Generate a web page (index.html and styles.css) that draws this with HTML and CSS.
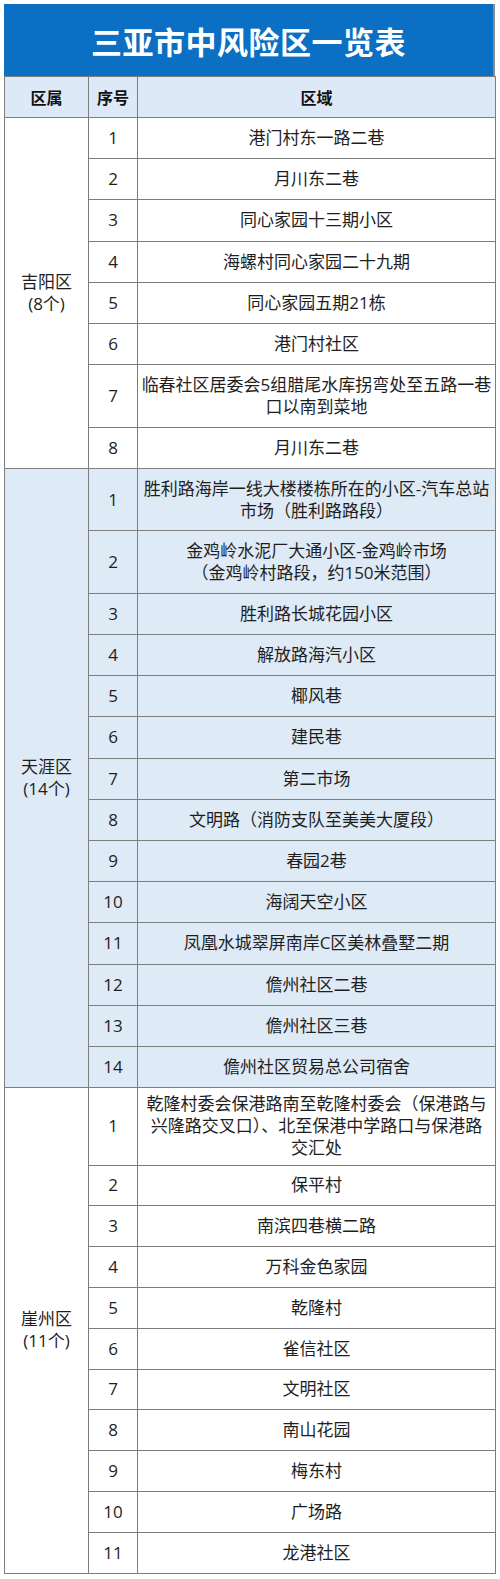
FILE: index.html
```html
<!DOCTYPE html>
<html lang="zh-CN">
<head>
<meta charset="utf-8">
<title>三亚市中风险区一览表</title>
<link rel="stylesheet" href="styles.css">
</head>
<body>
<div class="sheet">
  <div class="title">三亚市中风险区一览表</div>
  <table class="grid">
    <colgroup><col class="c1"><col class="c2"><col class="c3"></colgroup>
    <thead>
      <tr class="head"><th>区属</th><th>序号</th><th>区域</th></tr>
    </thead>
    <tbody class="jy">
      <tr class="r1"><td class="dist" rowspan="8">吉阳区<br>(8个)</td><td>1</td><td>港门村东一路二巷</td></tr>
      <tr class="r1"><td>2</td><td>月川东二巷</td></tr>
      <tr class="r1"><td>3</td><td>同心家园十三期小区</td></tr>
      <tr class="r1"><td>4</td><td>海螺村同心家园二十九期</td></tr>
      <tr class="r1"><td>5</td><td>同心家园五期21栋</td></tr>
      <tr class="r1"><td>6</td><td>港门村社区</td></tr>
      <tr class="r2"><td>7</td><td>临春社区居委会5组腊尾水库拐弯处至五路一巷<br>口以南到菜地</td></tr>
      <tr class="r1"><td>8</td><td>月川东二巷</td></tr>
    </tbody>
    <tbody class="ty">
      <tr class="r2"><td class="dist" rowspan="14">天涯区<br>(14个)</td><td>1</td><td>胜利路海岸一线大楼楼栋所在的小区-汽车总站<br>市场（胜利路路段）</td></tr>
      <tr class="r2"><td>2</td><td>金鸡岭水泥厂大通小区-金鸡岭市场<br>（金鸡岭村路段，约150米范围）</td></tr>
      <tr class="r1"><td>3</td><td>胜利路长城花园小区</td></tr>
      <tr class="r1"><td>4</td><td>解放路海汽小区</td></tr>
      <tr class="r1"><td>5</td><td>椰风巷</td></tr>
      <tr class="r1"><td>6</td><td>建民巷</td></tr>
      <tr class="r1"><td>7</td><td>第二市场</td></tr>
      <tr class="r1"><td>8</td><td>文明路（消防支队至美美大厦段）</td></tr>
      <tr class="r1"><td>9</td><td>春园2巷</td></tr>
      <tr class="r1"><td>10</td><td>海阔天空小区</td></tr>
      <tr class="r1"><td>11</td><td>凤凰水城翠屏南岸C区美林叠墅二期</td></tr>
      <tr class="r1"><td>12</td><td>儋州社区二巷</td></tr>
      <tr class="r1"><td>13</td><td>儋州社区三巷</td></tr>
      <tr class="r1"><td>14</td><td>儋州社区贸易总公司宿舍</td></tr>
    </tbody>
    <tbody class="yz">
      <tr class="r3"><td class="dist" rowspan="11">崖州区<br>(11个)</td><td>1</td><td>乾隆村委会保港路南至乾隆村委会（保港路与<br>兴隆路交叉口）、北至保港中学路口与保港路<br>交汇处</td></tr>
      <tr class="r1"><td>2</td><td>保平村</td></tr>
      <tr class="r1"><td>3</td><td>南滨四巷横二路</td></tr>
      <tr class="r1"><td>4</td><td>万科金色家园</td></tr>
      <tr class="r1"><td>5</td><td>乾隆村</td></tr>
      <tr class="r1"><td>6</td><td>雀信社区</td></tr>
      <tr class="r1"><td>7</td><td>文明社区</td></tr>
      <tr class="r1"><td>8</td><td>南山花园</td></tr>
      <tr class="r1"><td>9</td><td>梅东村</td></tr>
      <tr class="r1"><td>10</td><td>广场路</td></tr>
      <tr class="r1"><td>11</td><td>龙港社区</td></tr>
    </tbody>
  </table>
</div>
</body>
</html>
```
FILE: styles.css
```css
html, body {
  margin: 0;
  padding: 0;
  background: #ffffff;
}

body {
  font-family: "Open Sans", "Noto Sans CJK SC", sans-serif;
  color: #1e1e1e;
}

.sheet {
  padding: 4px 0 0 4px;
  width: 491px;
}

.title {
  height: 72px;
  background: #0b6fc3;
  color: #ffffff;
  font-family: "Noto Sans CJK SC", sans-serif;
  font-weight: 700;
  font-size: 31px;
  letter-spacing: 0.5px;
  display: flex;
  align-items: center;
  justify-content: center;
  border-right: 2px solid #8a8a8a;
  box-sizing: border-box;
}

.grid {
  width: 491px;
  border-collapse: collapse;
  table-layout: fixed;
  border: 1px solid #8a8a8a;
}

.c1 { width: 84px; }
.c2 { width: 49px; }
.c3 { width: 358px; }

.grid th,
.grid td {
  border: 1px solid #7d7d7d;
  text-align: center;
  vertical-align: middle;
  padding: 0 2px;
  font-size: 17px;
  line-height: 22px;
  white-space: nowrap;
}

.grid th {
  font-family: "Noto Sans CJK SC", sans-serif;
  font-weight: 700;
  font-size: 16px;
  color: #111111;
}

.head {
  height: 41px;
  background: #dde9f6;
}

.r1 { height: 41.2px; }
.r2 { height: 62.5px; }
.r3 { height: 77.5px; }

.yz .r1 { height: 40.8px; }

.ty { background: #deeaf6; }

.dist {
  line-height: 22px;
}
```
